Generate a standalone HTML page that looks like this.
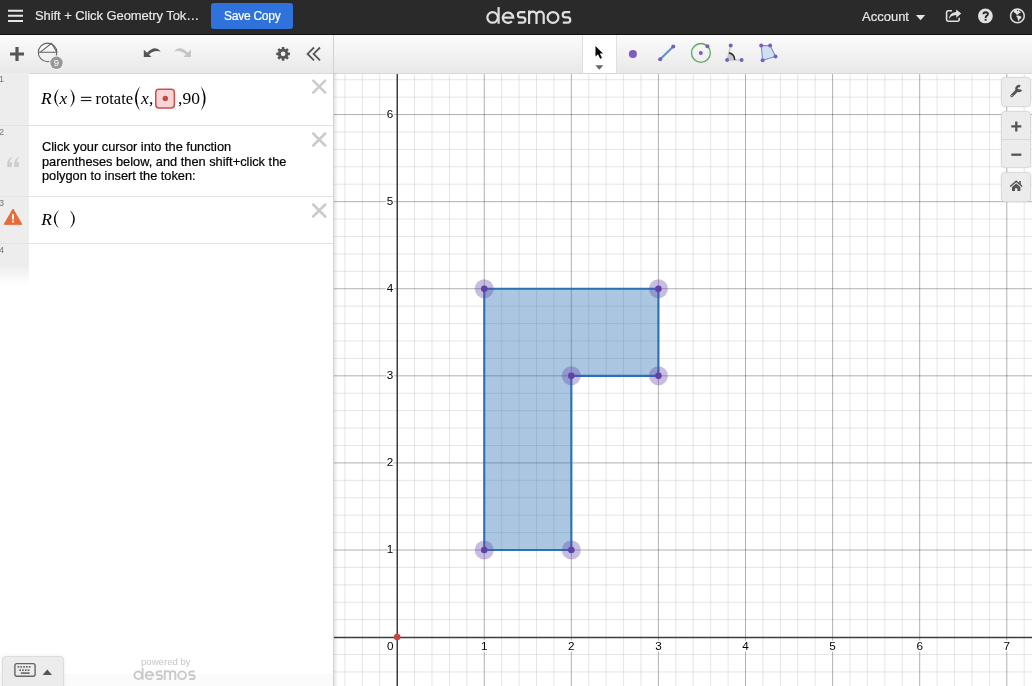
<!DOCTYPE html>
<html><head><meta charset="utf-8">
<style>
html,body{margin:0;padding:0;}
body{width:1032px;height:686px;overflow:hidden;position:relative;background:#fff;font-family:"Liberation Sans",sans-serif;}
.abs{position:absolute;}
svg.graph{position:absolute;left:0;top:0;}
#header{position:absolute;left:0;top:0;width:1032px;height:34px;background:#2a2a2a;border-bottom:1px solid #111;}
#title{position:absolute;left:35px;top:8px;font-size:13px;color:#e6e6e6;letter-spacing:-0.08px;white-space:nowrap;}
#save{position:absolute;left:211px;top:3px;width:82px;height:25.5px;background:#2f72dc;border-radius:3px;}
#save span{position:absolute;left:13px;top:6px;font-size:12px;color:#fff;letter-spacing:-0.25px;white-space:nowrap;}
#account{position:absolute;left:862px;top:9px;font-size:13px;color:#e6e6e6;white-space:nowrap;}
#panel{position:absolute;left:0;top:35px;width:333px;height:651px;background:#fff;}
#topbar{position:absolute;left:0;top:35px;width:333px;height:38px;background:linear-gradient(#fbfbfb,#e8e8e8);border-bottom:1px solid #d9d9d9;}
#gtool{position:absolute;left:334px;top:35px;width:698px;height:38px;background:linear-gradient(#fbfbfb,#e8e8e8);border-bottom:1px solid #d9d9d9;}
#pedge{position:absolute;left:333px;top:35px;width:1px;height:651px;background:#d2d2d2;}
#pshadow{position:absolute;left:334px;top:73px;width:4px;height:613px;background:linear-gradient(to right,rgba(0,0,0,0.10),rgba(0,0,0,0));}
.row{position:absolute;left:0;width:333px;border-bottom:1px solid #e2e2e2;}
.gut{position:absolute;left:0;top:0;width:29px;height:100%;background:#ededed;}
.num{position:absolute;left:-1px;top:1px;font-size:9px;color:#777;}
.math{position:absolute;font-family:"Liberation Serif",serif;color:#000;white-space:nowrap;}
.close{position:absolute;left:312px;width:14px;height:14px;}
.note{position:absolute;left:42px;top:14px;font-size:12.8px;line-height:14.5px;color:#000;white-space:nowrap;}
.gbtn{position:absolute;left:1001px;width:29.5px;background:#ececec;border:1px solid #dadada;border-radius:4px;box-sizing:border-box;box-shadow:0 0 3px rgba(0,0,0,0.08);}
#title,#save span,#account,.note{-webkit-text-stroke:0.2px currentColor;}
#root{position:absolute;left:0;top:0;width:1032px;height:686px;overflow:hidden;background:#fff;will-change:transform;}
</style></head><body><div id="root">
<svg class="graph" width="1032" height="686" viewBox="0 0 1032 686">
<rect x="333" y="73" width="699" height="613" fill="#fff"/>
<path d="M327.48 73V686 M344.90 73V686 M362.31 73V686 M379.73 73V686 M414.57 73V686 M431.99 73V686 M449.40 73V686 M466.82 73V686 M501.66 73V686 M519.08 73V686 M536.49 73V686 M553.91 73V686 M588.75 73V686 M606.17 73V686 M623.58 73V686 M641.00 73V686 M675.84 73V686 M693.26 73V686 M710.67 73V686 M728.09 73V686 M762.93 73V686 M780.35 73V686 M797.76 73V686 M815.18 73V686 M850.02 73V686 M867.44 73V686 M884.85 73V686 M902.27 73V686 M937.11 73V686 M954.53 73V686 M971.94 73V686 M989.36 73V686 M1024.20 73V686 M1041.62 73V686 M333 62.31H1032 M333 79.72H1032 M333 97.14H1032 M333 131.98H1032 M333 149.40H1032 M333 166.81H1032 M333 184.23H1032 M333 219.07H1032 M333 236.49H1032 M333 253.90H1032 M333 271.32H1032 M333 306.16H1032 M333 323.58H1032 M333 340.99H1032 M333 358.41H1032 M333 393.25H1032 M333 410.67H1032 M333 428.08H1032 M333 445.50H1032 M333 480.34H1032 M333 497.76H1032 M333 515.17H1032 M333 532.59H1032 M333 567.43H1032 M333 584.85H1032 M333 602.26H1032 M333 619.68H1032 M333 654.52H1032 M333 671.94H1032 M333 689.35H1032" stroke="#000" stroke-opacity="0.1" stroke-width="1" fill="none"/>
<path d="M484.24 73V686 M571.33 73V686 M658.42 73V686 M745.51 73V686 M832.60 73V686 M919.69 73V686 M1006.78 73V686 M333 114.56H1032 M333 201.65H1032 M333 288.74H1032 M333 375.83H1032 M333 462.92H1032 M333 550.01H1032" stroke="#000" stroke-opacity="0.31" stroke-width="1" fill="none"/>
<g font-family="Liberation Sans" font-size="11.7" fill="#000" stroke="#fff" stroke-width="3" paint-order="stroke" stroke-linejoin="round">
<text x="484.24" y="650" text-anchor="middle">1</text>
<text x="571.33" y="650" text-anchor="middle">2</text>
<text x="658.42" y="650" text-anchor="middle">3</text>
<text x="745.51" y="650" text-anchor="middle">4</text>
<text x="832.60" y="650" text-anchor="middle">5</text>
<text x="919.69" y="650" text-anchor="middle">6</text>
<text x="1006.78" y="650" text-anchor="middle">7</text>
<text x="390.15" y="650" text-anchor="middle">0</text>
<text x="393.15" y="553.41" text-anchor="end">1</text>
<text x="393.15" y="466.32" text-anchor="end">2</text>
<text x="393.15" y="379.23" text-anchor="end">3</text>
<text x="393.15" y="292.14" text-anchor="end">4</text>
<text x="393.15" y="205.05" text-anchor="end">5</text>
<text x="393.15" y="117.96" text-anchor="end">6</text>
</g>
<path d="M397.25 73V686" stroke="#3c3c3c" stroke-width="1.5"/>
<path d="M333 637.45H1032" stroke="#3c3c3c" stroke-width="1.5"/>
<polygon points="484.24,288.74 658.42,288.74 658.42,375.83 571.33,375.83 571.33,550.01 484.24,550.01" fill="#2d70b3" fill-opacity="0.4" stroke="#2d70b3" stroke-width="2.1" stroke-linejoin="round"/>
<circle cx="484.24" cy="288.74" r="9.5" fill="#6042a6" fill-opacity="0.35"/><circle cx="658.42" cy="288.74" r="9.5" fill="#6042a6" fill-opacity="0.35"/><circle cx="658.42" cy="375.83" r="9.5" fill="#6042a6" fill-opacity="0.35"/><circle cx="571.33" cy="375.83" r="9.5" fill="#6042a6" fill-opacity="0.35"/><circle cx="571.33" cy="550.01" r="9.5" fill="#6042a6" fill-opacity="0.35"/><circle cx="484.24" cy="550.01" r="9.5" fill="#6042a6" fill-opacity="0.35"/><circle cx="484.24" cy="288.74" r="3.3" fill="#6042a6"/><circle cx="658.42" cy="288.74" r="3.3" fill="#6042a6"/><circle cx="658.42" cy="375.83" r="3.3" fill="#6042a6"/><circle cx="571.33" cy="375.83" r="3.3" fill="#6042a6"/><circle cx="571.33" cy="550.01" r="3.3" fill="#6042a6"/><circle cx="484.24" cy="550.01" r="3.3" fill="#6042a6"/>
<circle cx="397.15" cy="637.10" r="3.3" fill="#c74440"/>
</svg>

<!-- graph toolbar -->
<div id="gtool"></div>
<div class="abs" style="left:582px;top:35px;width:35px;height:38px;background:#fff;border-left:1px solid #e0e0e0;border-right:1px solid #e0e0e0;box-sizing:border-box;"></div>
<svg class="abs" style="left:0;top:0" width="1032" height="80">
  <!-- arrow cursor -->
  <path d="M595.5 46 L595.5 56.5 L598 54.3 L600.2 58.8 L602 58 L599.8 53.6 L603 53.4 Z" fill="#000"/>
  <path d="M595.3 65.3 H603.3 L599.3 69.7 Z" fill="#666"/>
  <!-- point -->
  <circle cx="632.9" cy="54.1" r="4" fill="#7d5cbe"/>
  <!-- segment -->
  <path d="M660.2 59.3 L673.3 46.4" stroke="#5893cf" stroke-width="2.1"/>
  <circle cx="660.2" cy="59.3" r="2" fill="#7d5cbe"/><circle cx="673.3" cy="46.4" r="2" fill="#7d5cbe"/>
  <!-- circle -->
  <circle cx="700.9" cy="52.9" r="9.4" fill="none" stroke="#5ca766" stroke-width="1.3"/>
  <circle cx="700.8" cy="52.9" r="2" fill="#7d5cbe"/><circle cx="707.4" cy="46.3" r="2" fill="#7d5cbe"/>
  <!-- angle -->
  <path d="M727.1 60.1 L730.7 45.5 M727.1 60.1 L741.6 60.1" stroke="#c4c4c4" stroke-width="1.2"/>
  <path d="M727.1 60.1 L728.9 52.7 A7.6 7.6 0 0 1 734.7 60.1 Z" fill="#c6c6c6"/>
  <path d="M728.9 52.7 A7.6 7.6 0 0 1 734.7 60.1" fill="none" stroke="#2a2a2a" stroke-width="1.5"/>
  <circle cx="727.1" cy="60.1" r="2" fill="#7d5cbe"/><circle cx="730.7" cy="45.5" r="2" fill="#7d5cbe"/><circle cx="741.6" cy="60.1" r="2" fill="#7d5cbe"/>
  <!-- polygon -->
  <path d="M761.2 45.6 L770.1 45.6 L775.5 56.5 L762.6 60.3 Z" fill="#d3dfee" stroke="#5f9ad8" stroke-width="1.1"/>
  <circle cx="761.2" cy="45.6" r="2" fill="#7d5cbe"/><circle cx="770.1" cy="45.6" r="2" fill="#7d5cbe"/><circle cx="775.5" cy="56.5" r="2" fill="#7d5cbe"/><circle cx="762.6" cy="60.3" r="2" fill="#7d5cbe"/>
</svg>

<!-- graph settings buttons -->
<div class="gbtn" style="top:77px;height:30px;"></div>
<div class="gbtn" style="top:111px;height:57px;"></div>
<div class="abs" style="left:1002px;top:139px;width:28px;height:1px;background:#d9d9d9;"></div>
<div class="gbtn" style="top:172px;height:30px;"></div>
<svg class="abs" style="left:995px;top:75px" width="37" height="130" viewBox="995 75 37 130">
  <!-- wrench -->
  <path d="M1011.8 95.7 L1017.4 90.1" stroke="#555" stroke-width="2.9" stroke-linecap="round"/>
  <path d="M1020.98 89.7 A2.4 2.4 0 1 1 1020.1 86.42" fill="none" stroke="#555" stroke-width="2.4"/>
  <path d="M1011.5 96 L1012.3 95.2" stroke="#ececec" stroke-width="0.9" stroke-linecap="round"/>
  <!-- plus -->
  <path d="M1016.3 121.4 V131.4 M1011.3 126.4 H1021.3" stroke="#555" stroke-width="2.3"/>
  <!-- minus -->
  <path d="M1011.3 154.7 H1021.3" stroke="#555" stroke-width="2.3"/>
  <!-- home -->
  <path d="M1010.2 186.5 L1016.2 181.2 L1022.2 186.5" fill="none" stroke="#555" stroke-width="1.5"/>
  <rect x="1019.2" y="181" width="1.6" height="3" fill="#555"/>
  <path d="M1016.2 183.5 L1020.4 187.1 V190.9 H1017.4 V188.3 H1015 V190.9 H1012 V187.1 Z" fill="#555"/>
</svg>

<!-- expression panel -->
<div id="panel"></div>
<div id="topbar"></div>
<svg class="abs" style="left:0;top:35px" width="333" height="38" viewBox="0 35 333 38">
  <path d="M17 47 V61 M10 54 H24" stroke="#555" stroke-width="3.2"/>
  <circle cx="47.6" cy="52.4" r="9.3" fill="none" stroke="#606060" stroke-width="1.05"/>
  <path d="M38.3 52.3 H57 M40 52.3 L51.5 43.3 L56.9 52.3" fill="none" stroke="#606060" stroke-width="1.05"/>
  <circle cx="56.5" cy="62.8" r="7.3" fill="#f3f3f3"/>
  <circle cx="56.5" cy="62.8" r="6.2" fill="#979797"/>
  <text x="56.5" y="66.3" font-size="9.5" font-family="Liberation Sans" fill="#fff" text-anchor="middle">9</text>
  <!-- undo -->
  <path d="M143.8 49.7 V56.9 H151.5 L148.9 54.6 Q154 49.3 160.8 51.6 Q155 44.2 147.1 52.8 Z" fill="#555"/>
  <!-- redo -->
  <path d="M191 49.7 V56.9 H183.3 L185.9 54.6 Q180.8 49.3 174 51.6 Q179.8 44.2 187.7 52.8 Z" fill="#c4c4c4"/>
  <!-- gear -->
  <g transform="translate(283.1 53.8)" fill="#555">
    <circle r="5.1"/>
    <rect x="-1.35" y="-6.9" width="2.7" height="13.8" rx="0.6"/>
    <rect x="-1.35" y="-6.9" width="2.7" height="13.8" rx="0.6" transform="rotate(45)"/>
    <rect x="-1.35" y="-6.9" width="2.7" height="13.8" rx="0.6" transform="rotate(90)"/>
    <rect x="-1.35" y="-6.9" width="2.7" height="13.8" rx="0.6" transform="rotate(135)"/>
  </g>
  <circle cx="283.1" cy="53.8" r="2.4" fill="#f1f1f1"/>
  <!-- << -->
  <path d="M314 47.5 L307.6 53.9 L314 60.3 M320 47.5 L313.6 53.9 L320 60.3" fill="none" stroke="#555" stroke-width="1.8"/>
</svg>

<!-- row 1 -->
<div class="row" style="top:73px;height:52px;">
  <div class="gut"><div class="num">1</div></div>
</div>
<!-- row 2 -->
<div class="row" style="top:126px;height:70px;">
  <div class="gut"><div class="num">2</div></div>
  <div class="note">Click your cursor into the function<br>parentheses below, and then shift+click the<br>polygon to insert the token:</div>
</div>
<!-- row 3 -->
<div class="row" style="top:197px;height:46px;">
  <div class="gut"><div class="num">3</div></div>
</div>
<!-- row 4 -->
<div class="row" style="top:244px;height:46px;border-bottom:none;">
  <div class="gut" style="background:linear-gradient(#ededed 0%,#ededed 46%,rgba(237,237,237,0) 89%);"><div class="num">4</div></div>
</div>

<svg class="abs" style="left:0;top:73px" width="333" height="180" viewBox="0 73 333 180">
  <!-- close X -->
  <g stroke="#cbcbcb" stroke-width="2.5" stroke-linecap="round"><path d="M313.2 80.6 L325.2 92.6 M325.2 80.6 L313.2 92.6"/><path d="M313.2 133.5 L325.2 145.5 M325.2 133.5 L313.2 145.5"/><path d="M313.2 204.5 L325.2 216.5 M325.2 204.5 L313.2 216.5"/></g>
  <!-- quote -->
  <path d="M7.2 166.9 H11.9 V162.2 H9.6 Q9.9 159.6 12.3 157.6 L11.7 156.9 Q7.2 159.4 7.2 163.6 Z M14.2 166.9 H18.9 V162.2 H16.6 Q16.9 159.6 19.3 157.6 L18.7 156.9 Q14.2 159.4 14.2 163.6 Z" fill="#cdcdcd"/>
  <!-- warning -->
  <path d="M13 209.1 L21.8 224.3 H4.2 Z" fill="#e86b3a" stroke="#e86b3a" stroke-width="1" stroke-linejoin="round"/>
  <path d="M13 214.2 V219.6" stroke="#fff" stroke-width="1.9"/>
  <rect x="12.05" y="220.6" width="1.9" height="1.9" fill="#fff"/>
  <!-- token -->
  <rect x="155.75" y="89.35" width="18.6" height="18.6" rx="3.2" fill="#f5d5d5" stroke="#d14e4a" stroke-width="1.5"/>
  <circle cx="165.3" cy="98.4" r="2.7" fill="#c94642"/>
</svg>

<!-- math -->
<svg class="abs" style="left:0;top:73px" width="333" height="170" viewBox="0 73 333 170">
<g font-family="Liberation Serif" fill="#000">
  <text x="41" y="103.6" font-size="17.5" font-style="italic">R</text>
  <path d="M58.90 88.80 Q49.70 98.20 58.90 107.60 Q52.50 98.20 58.90 88.80Z"/>
  <text x="59.6" y="103.6" font-size="17.5" font-style="italic">x</text>
  <path d="M70.00 88.80 Q79.20 98.20 70.00 107.60 Q76.40 98.20 70.00 88.80Z"/>
  <rect x="80.9" y="96.8" width="10.5" height="1" />
  <rect x="80.9" y="100.1" width="10.5" height="1" />
  <text x="95.5" y="103.6" font-size="16.5">rotate</text>
  <path d="M140.10 86.30 Q129.90 98.50 140.10 110.70 Q133.10 98.50 140.10 86.30Z"/>
  <text x="141" y="103.6" font-size="17.5" font-style="italic">x</text>
  <text x="149" y="103.6" font-size="17.5">,</text>
  <text x="178" y="103.6" font-size="17.5">,90</text>
  <path d="M200.90 86.30 Q210.30 98.50 200.90 110.70 Q207.10 98.50 200.90 86.30Z"/>
  <text x="41.3" y="224.6" font-size="17.5" font-style="italic">R</text>
  <path d="M58.90 210.00 Q48.90 219.30 58.90 228.60 Q51.70 219.30 58.90 210.00Z"/>
  <path d="M69.80 210.00 Q79.80 219.30 69.80 228.60 Q77.00 219.30 69.80 210.00Z"/>
</g>
</svg>

<div class="abs" style="left:0;top:674px;width:333px;height:12px;background:#fbfbfb;"></div>
<!-- keyboard button -->
<div class="abs" style="left:2px;top:656px;width:62px;height:40px;background:#ececec;border:1px solid #dcdcdc;border-radius:4px;box-sizing:border-box;box-shadow:0 0 4px rgba(0,0,0,0.08);"></div>
<svg class="abs" style="left:0;top:650px" width="70" height="36" viewBox="0 650 70 36">
  <rect x="14.9" y="663.6" width="20.2" height="12.6" rx="2" fill="none" stroke="#666" stroke-width="1.4"/>
  <g fill="#666">
    <rect x="17.6" y="666" width="1.7" height="1.7"/><rect x="20.4" y="666" width="1.7" height="1.7"/><rect x="23.2" y="666" width="1.7" height="1.7"/><rect x="26.0" y="666" width="1.7" height="1.7"/><rect x="28.8" y="666" width="1.7" height="1.7"/>
    <rect x="19.3" y="669.3" width="1.7" height="1.7"/><rect x="22.1" y="669.3" width="1.7" height="1.7"/><rect x="24.9" y="669.3" width="1.7" height="1.7"/><rect x="27.7" y="669.3" width="1.7" height="1.7"/>
    <rect x="20.9" y="672.3" width="8.8" height="1.6"/>
  </g>
  <path d="M42.6 674.9 L47.3 669.6 L52 674.9 Z" fill="#555"/>
</svg>
<!-- powered by -->
<div class="abs" style="left:141px;top:656.3px;font-size:9.6px;color:#c6c6c6;white-space:nowrap;">powered by</div>
<svg class="abs" style="left:120px;top:660px" width="90" height="26" viewBox="120 660 90 26">
  <g fill="none" stroke="#c9c9c9" stroke-width="2.6" transform="translate(133.6 667.9) scale(0.726 0.713) translate(-486.2 -7.1)">
      <circle cx="492.6" cy="17.45" r="5.25"/>
      <path d="M498.6 7.1 V23.8"/>
      <path d="M503 17.55 H513.2 A5.2 5.2 0 1 0 511.9 21.2"/>
      <path d="M525.3 12.2 H520.5 A2.625 2.625 0 0 0 520.5 17.45 H522.7 A2.625 2.625 0 0 1 522.7 22.7 H517.9"/>
      <path d="M529.1 10.5 V24 M529.1 15.3 A3.7 3.7 0 0 1 536.5 15.3 V24 M536.5 15.3 A3.6 3.6 0 0 1 543.7 15.3 V24"/>
      <circle cx="553" cy="17.45" r="5.4"/>
      <path d="M570.2 12.2 H565.4 A2.625 2.625 0 0 0 565.4 17.45 H567.6 A2.625 2.625 0 0 1 567.6 22.7 H562.8"/>
  </g>
</svg>

<div id="pedge"></div>
<div id="pshadow"></div>

<!-- header -->
<div id="header">
  <svg class="abs" style="left:0;top:0" width="40" height="34">
    <path d="M8 10.7 H23 M8 15.8 H23 M8 21 H23" stroke="#e6e6e6" stroke-width="2"/>
  </svg>
  <div id="title">Shift + Click Geometry Tok…</div>
  <div id="save"><span>Save Copy</span></div>
  <svg class="abs" style="left:480px;top:0" width="100" height="34" viewBox="480 0 100 34">
    <g fill="none" stroke="#dedede" stroke-width="2.2">
      <circle cx="492.6" cy="17.45" r="5.25"/>
      <path d="M498.6 7.1 V23.8"/>
      <path d="M503 17.55 H513.2 A5.2 5.2 0 1 0 511.9 21.2"/>
      <path d="M525.3 12.2 H520.5 A2.625 2.625 0 0 0 520.5 17.45 H522.7 A2.625 2.625 0 0 1 522.7 22.7 H517.9"/>
      <path d="M529.1 10.5 V24 M529.1 15.3 A3.7 3.7 0 0 1 536.5 15.3 V24 M536.5 15.3 A3.6 3.6 0 0 1 543.7 15.3 V24"/>
      <circle cx="553" cy="17.45" r="5.4"/>
      <path d="M570.2 12.2 H565.4 A2.625 2.625 0 0 0 565.4 17.45 H567.6 A2.625 2.625 0 0 1 567.6 22.7 H562.8"/>
    </g>
  </svg>
  <div id="account">Account</div>
  <svg class="abs" style="left:900px;top:0" width="132" height="34" viewBox="900 0 132 34">
    <path d="M915.9 15.1 H925.2 L920.55 20.3Z" fill="#e6e6e6"/>
    <!-- share -->
    <path d="M952 10.8 H948.2 a1.6 1.6 0 0 0 -1.6 1.6 V19.6 a1.6 1.6 0 0 0 1.6 1.6 H957.6 a1.6 1.6 0 0 0 1.6 -1.6 V17.8" fill="none" stroke="#e0e0e0" stroke-width="1.6"/>
    <path d="M949.2 19.8 Q950 15.3 956.2 15 V17.8 L961.2 13.6 L956.2 9.4 V12.1 Q948.8 12.8 949.2 19.8Z" fill="#e0e0e0"/>
    <!-- help -->
    <circle cx="985.4" cy="15.9" r="7.4" fill="#e0e0e0"/>
    <path d="M983.4 14.3 Q983.4 12.2 985.7 12.2 Q987.9 12.2 987.9 14.1 Q987.9 15.3 986.6 15.9 Q985.6 16.5 985.6 17.9" fill="none" stroke="#2a2a2a" stroke-width="1.9"/>
    <rect x="984.65" y="18.9" width="1.9" height="1.8" fill="#2a2a2a"/>
    <!-- globe -->
    <circle cx="1017.4" cy="15.9" r="6.85" fill="none" stroke="#e0e0e0" stroke-width="1.5"/>
    <path d="M1013.6 10.6 Q1015.5 9 1018.2 9.3 L1019.4 10.2 L1019.1 11.2 L1020.3 11.6 L1020.7 12.8 L1019.2 13.3 L1018 14.4 L1016.6 14.8 L1015.8 13.4 L1014 12.6 Z M1015.9 15.7 L1018.5 15.5 L1021.2 16.6 L1021.3 18 L1019.6 19.3 L1018.6 21.4 L1017.9 19.4 L1017.3 17.4 Z" fill="#e0e0e0"/>
    <circle cx="1017.5" cy="10.5" r="0.6" fill="#2a2a2a"/>
  </svg>
</div>
</div></body></html>
